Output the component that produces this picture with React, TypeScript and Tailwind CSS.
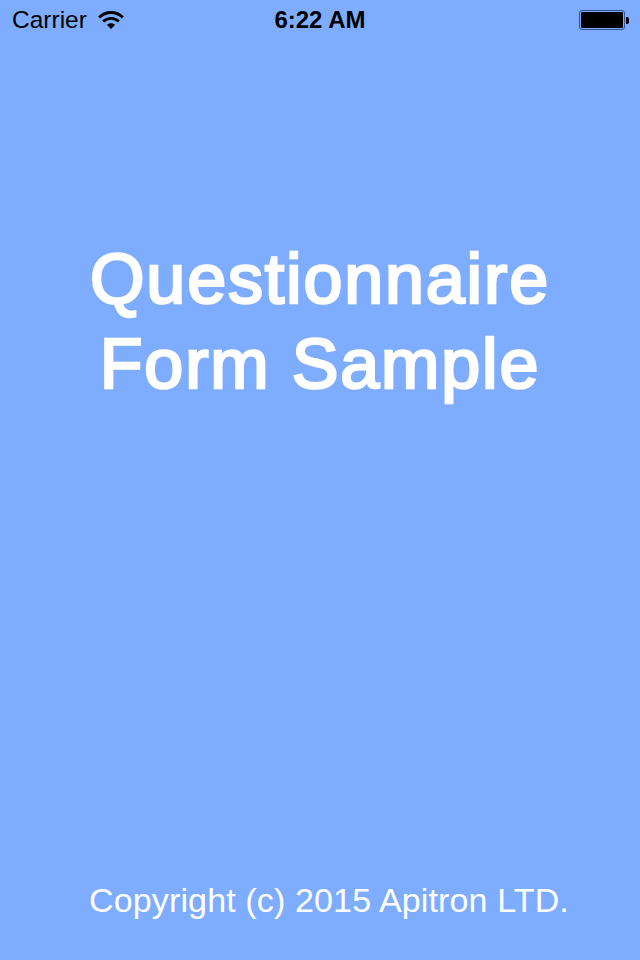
import React from 'react'

const WifiIcon = () => (
  <svg width="26" height="20" viewBox="0 0 26 20" className="ml-[11px]">
    <path d="M1.2 7.5C7.8 0.8 18.2 0.8 24.8 7.5" fill="none" stroke="#000" strokeWidth="2.8" />
    <path d="M5.2 11.5C9.6 7.2 16.4 7.2 20.8 11.5" fill="none" stroke="#000" strokeWidth="2.8" />
    <path d="M8.8 14.8C11.2 12.6 14.8 12.6 17.2 14.8L13 19Z" fill="#000" />
  </svg>
)

const Battery = () => (
  <div className="flex items-center">
    <div className="w-[46px] h-[20px] rounded-[3px] border border-[#2c4f9e] p-[1px]">
      <div className="w-full h-full bg-black rounded-[1px]" />
    </div>
    <div className="w-[3px] h-[7px] bg-black rounded-r-[2px] ml-[1px]" />
  </div>
)

export default function App() {
  return (
    <div
      className="w-[640px] h-[960px] bg-[#7eadff] flex flex-col overflow-hidden"
      style={{ fontFamily: '"Liberation Sans", Arial, sans-serif' }}
    >
      {/* status bar */}
      <div className="h-[40px] grid grid-cols-3 items-center text-black">
        <div className="flex items-center pl-[12px]">
          <span className="text-[24.5px] leading-none">Carrier</span>
          <WifiIcon />
        </div>
        <div className="text-center text-[24px] leading-none font-bold whitespace-nowrap">6:22 AM</div>
        <div className="flex justify-end pr-[11px]">
          <Battery />
        </div>
      </div>

      {/* title */}
      <h1 className="mt-[197px] text-center text-white font-normal text-[70px] leading-[85px] tracking-[1.85px] [-webkit-text-stroke:2.6px_white]">
        Questionnaire
        <br />
        Form Sample
      </h1>

      {/* footer */}
      <p className="mt-auto mb-[40px] pl-[89px] text-white text-[34px] leading-[40px] tracking-[0.14px] whitespace-nowrap">
        Copyright (c) 2015 Apitron LTD.
      </p>
    </div>
  )
}
